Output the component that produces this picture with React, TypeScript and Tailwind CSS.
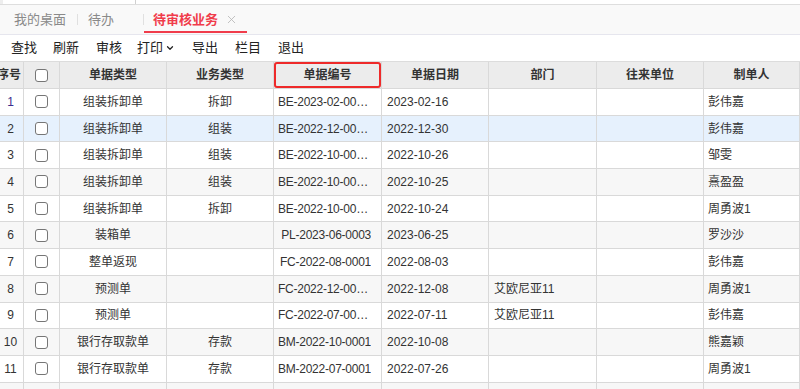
import { ChevronDown, X } from "lucide-react";

const cols = "grid-cols-[24px_36px_107px_107px_108px_107px_108px_107px_96px]";

const rows = [
  ["1", "组装拆卸单", "拆卸", "BE-2023-02-00-0001", "2023-02-16", "", "", "彭伟嘉"],
  ["2", "组装拆卸单", "组装", "BE-2022-12-00-0001", "2022-12-30", "", "", "彭伟嘉"],
  ["3", "组装拆卸单", "组装", "BE-2022-10-00-0003", "2022-10-26", "", "", "邹雯"],
  ["4", "组装拆卸单", "组装", "BE-2022-10-00-0002", "2022-10-25", "", "", "熹盈盈"],
  ["5", "组装拆卸单", "拆卸", "BE-2022-10-00-0001", "2022-10-24", "", "", "周勇波1"],
  ["6", "装箱单", "", "PL-2023-06-0003", "2023-06-25", "", "", "罗沙沙"],
  ["7", "整单返现", "", "FC-2022-08-0001", "2022-08-03", "", "", "彭伟嘉"],
  ["8", "预测单", "", "FC-2022-12-00-0001", "2022-12-08", "艾欧尼亚11", "", "周勇波1"],
  ["9", "预测单", "", "FC-2022-07-00-0001", "2022-07-11", "艾欧尼亚11", "", "彭伟嘉"],
  ["10", "银行存取款单", "存款", "BM-2022-10-0001", "2022-10-08", "", "", "熊嘉颖"],
  ["11", "银行存取款单", "存款", "BM-2022-07-0001", "2022-07-26", "", "", "周勇波1"],
  ["", "", "", "", "", "", "", ""],
];

const cell = "border-r border-b border-[#d9d9d9] flex items-center overflow-hidden whitespace-nowrap";

function Checkbox() {
  return <div className="w-[13px] h-[13px] rounded-[3px] border border-[#767676] bg-white" />;
}

export default function App() {
  return (
    <div
      className="w-[800px] h-[389px] overflow-hidden bg-white text-[#333]"
      style={{ fontFamily: '"Liberation Sans", "Noto Sans CJK SC", sans-serif' }}
    >
      {/* top strip */}
      <div className="h-[5px] flex bg-[#eeeeee] border-b border-[#dedede]">
        <div className="w-[3px]" />
        <div className="w-[132px] bg-white" />
        <div className="w-[1px] bg-[#d0d0d0]" />
        <div className="flex-1 bg-white" />
      </div>

      {/* tabs */}
      <div className="h-[30px] flex items-stretch bg-[#f9f9f9] border-b border-[#e6e6ee] text-[13px]">
        <div className="flex items-center pl-[14px] pr-[11px] text-[#8a8a8a]">我的桌面</div>
        <div className="w-px bg-[#e0e0e0] my-[9px]" />
        <div className="flex items-center pl-[10px] pr-[29px] text-[#8a8a8a]">待办</div>
        <div className="w-px bg-[#e0e0e0] my-[9px]" />
        <div className="relative flex items-center pl-[9px] pr-[9px] gap-[7px]">
          <span className="text-[#f03c4b] font-bold">待审核业务</span>
          <X size={13} strokeWidth={1.5} className="text-[#b5b5b5]" />
          <div className="absolute left-0 right-0 bottom-[1px] h-[2px] bg-[#f03c4b]" />
        </div>
      </div>

      {/* toolbar */}
      <div className="h-[26px] flex items-center text-[13px] text-[#222] pl-[11px]">
        <span className="mr-[16px]">查找</span>
        <span className="mr-[17px]">刷新</span>
        <span className="mr-[15px]">审核</span>
        <span className="mr-[17px] flex items-center">
          打印
          <ChevronDown size={10} strokeWidth={3} className="ml-[2px]" />
        </span>
        <span className="mr-[17px]">导出</span>
        <span className="mr-[17px]">栏目</span>
        <span>退出</span>
      </div>

      {/* table */}
      <div className="border-t border-[#dcdcdc]">
        <div className={`grid ${cols} h-[27px] bg-[#ececec] text-[12px] font-bold text-[#333]`}>
          <div className={`${cell} justify-end pr-[2px]`}>序号</div>
          <div className={`${cell} justify-center`}>
            <Checkbox />
          </div>
          <div className={`${cell} justify-center`}>单据类型</div>
          <div className={`${cell} justify-center`}>业务类型</div>
          <div className={`${cell} justify-center relative overflow-visible`}>
            单据编号
            <div className="absolute inset-0 border-2 border-[#ee2a2a] rounded-[3px]" />
          </div>
          <div className={`${cell} justify-center`}>单据日期</div>
          <div className={`${cell} justify-center`}>部门</div>
          <div className={`${cell} justify-center`}>往来单位</div>
          <div className={`${cell} justify-center`}>制单人</div>
        </div>

        {rows.map((r, i) => {
          const bg = i === 1 ? "bg-[#e6f1fd]" : i % 2 === 1 ? "bg-[#f7f7f7]" : "bg-white";
          return (
            <div key={i} className={`grid ${cols} h-[26.7px] text-[12px] ${bg}`}>
              <div className={`${cell} justify-center pr-[2px] ${i === 0 ? "text-[#3b2f8e]" : ""}`}>{r[0]}</div>
              <div className={`${cell} justify-center`}>{r[0] && <Checkbox />}</div>
              <div className={`${cell} justify-center`}>{r[1]}</div>
              <div className={`${cell} justify-center`}>{r[2]}</div>
              <div className="border-r border-b border-[#d9d9d9] flex items-center min-w-0 pl-[4px] pr-[10px] tracking-[-0.25px]">
                <span className="block w-full truncate text-right">{r[3]}</span>
              </div>
              <div className={`${cell} pl-[5px]`}>{r[4]}</div>
              <div className={`${cell} pl-[5px]`}>{r[5]}</div>
              <div className={`${cell} pl-[5px]`}>{r[6]}</div>
              <div className={`${cell} pl-[4px]`}>{r[7]}</div>
            </div>
          );
        })}
      </div>
    </div>
  );
}
